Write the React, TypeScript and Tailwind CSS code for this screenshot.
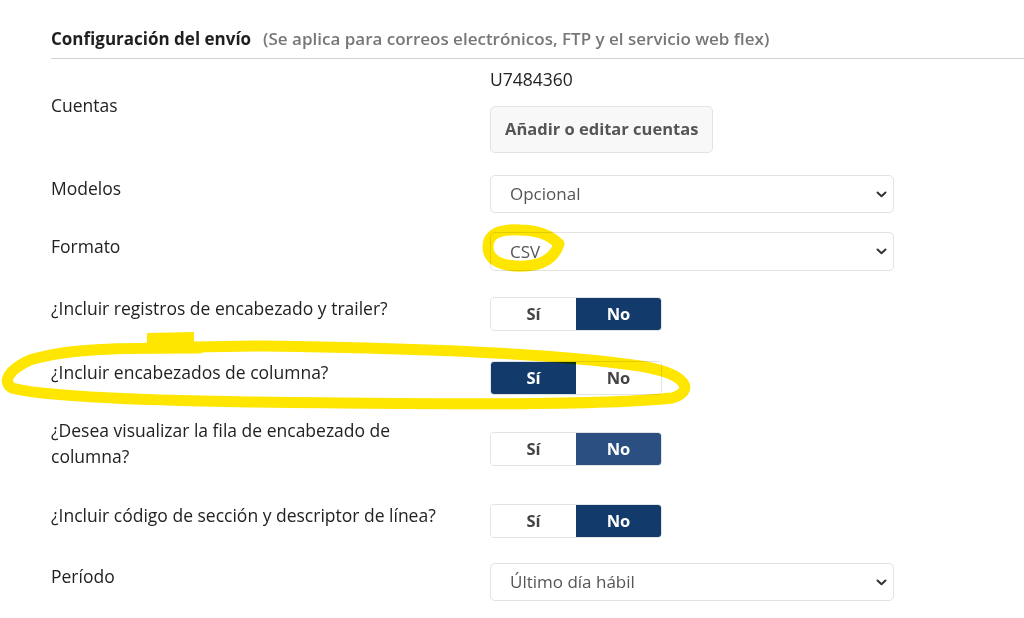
import React from 'react';

const Chevron = () => (
  <svg width="11" height="7" viewBox="0 0 11 7" fill="none">
    <path d="M1.5 1.5 L5.5 5.2 L9.5 1.5" stroke="#333" strokeWidth="2" strokeLinecap="round" strokeLinejoin="round" />
  </svg>
);

function SelectBox({ value, h = 'h-[38px]' }: { value: string; h?: string }) {
  return (
    <div className={`flex w-[404px] ${h} items-center justify-between rounded-[5px] border border-[#e2e2e2] bg-white pl-[19px] pr-[6px] text-[17px] text-[#555]`}>
      <span>{value}</span>
      <Chevron />
    </div>
  );
}

function Toggle({ yes, dim }: { yes: boolean; dim?: boolean }) {
  const on = dim ? 'bg-[#2a4f80] text-white' : 'bg-[#123a6b] text-white';
  const off = 'bg-white text-[#444]';
  return (
    <div className="flex h-[34px] w-[172px] overflow-hidden rounded-[4px] border border-[#e3e3e3] text-[16.5px] font-bold">
      <div className={`flex w-1/2 items-center justify-center ${yes ? on : off}`}>Sí</div>
      <div className={`flex w-1/2 items-center justify-center ${yes ? off : on}`}>No</div>
    </div>
  );
}

function Row({ label, mt, children }: { label: React.ReactNode; mt: string; children: React.ReactNode }) {
  return (
    <div className={`flex items-center ${mt}`}>
      <div className="mb-[12px] mr-[39px] w-[400px] leading-[26px]">{label}</div>
      {children}
    </div>
  );
}

export default function App() {
  return (
    <div className="relative h-[618px] overflow-hidden bg-white font-['Open_Sans','Lato',sans-serif] text-[17.5px] text-[#222]">
      <div className="ml-[51px] border-b border-[#cfcfcf] pb-[8px] pt-[28px] text-[17px] leading-[22px]">
        <span className="font-bold text-[#1f1f1f]">Configuración del envío</span>
        <span className="ml-[12px] font-semibold text-[#777]">(Se aplica para correos electrónicos, FTP y el servicio web flex)</span>
      </div>

      <div className="pl-[51px]">
        <Row label="Cuentas" mt="mt-[10px]">
          <div className="flex flex-col items-start">
            <div className="leading-[20px]">U7484360</div>
            <button className="mt-[17px] h-[47px] rounded-[5px] border border-[#e3e3e3] bg-[#f8f8f8] px-[14px] text-[16.5px] font-bold text-[#555]">
              Añadir o editar cuentas
            </button>
          </div>
        </Row>
        <Row label="Modelos" mt="mt-[22px]">
          <SelectBox value="Opcional" />
        </Row>
        <Row label="Formato" mt="mt-[19px]">
          <SelectBox value="CSV" h="h-[39px]" />
        </Row>
        <Row label="¿Incluir registros de encabezado y trailer?" mt="mt-[24px]">
          <Toggle yes={false} />
        </Row>
        <Row label="¿Incluir encabezados de columna?" mt="mt-[26px]">
          <Toggle yes />
        </Row>
        <Row label="¿Desea visualizar la fila de encabezado de columna?" mt="mt-[20px]">
          <Toggle yes={false} dim />
        </Row>
        <Row label="¿Incluir código de sección y descriptor de línea?" mt="mt-[21px]">
          <Toggle yes={false} />
        </Row>
        <Row label="Período" mt="mt-[23px]">
          <SelectBox value="Último día hábil" />
        </Row>
      </div>

      {/* highlighter marks drawn over the form */}
      <svg className="pointer-events-none absolute inset-0 mix-blend-multiply" width="1024" height="618" viewBox="0 0 1024 618" fill="none">
        <g stroke="#ffe600" strokeLinecap="round" strokeLinejoin="round">
          <path
            d="M520 230 C500 229 488 233 488 247 C488 262 505 267 525 266 C545 265 555 256 559 244 C550 235 538 230 520 230 Z"
            strokeWidth="11"
          />
          <path d="M148 334 L193 333 L193 350 L148 351 Z" fill="#ffe600" strokeWidth="2" />
          <path
            d="M193 347 L262 346 C420 348 560 354 640 366 C690 374 694 392 672 398 C600 406 420 404 250 402 C130 400 40 396 12 388 C2 382 8 370 30 360 C70 348 120 348 200 348"
            strokeWidth="11"
          />
        </g>
      </svg>
    </div>
  );
}
